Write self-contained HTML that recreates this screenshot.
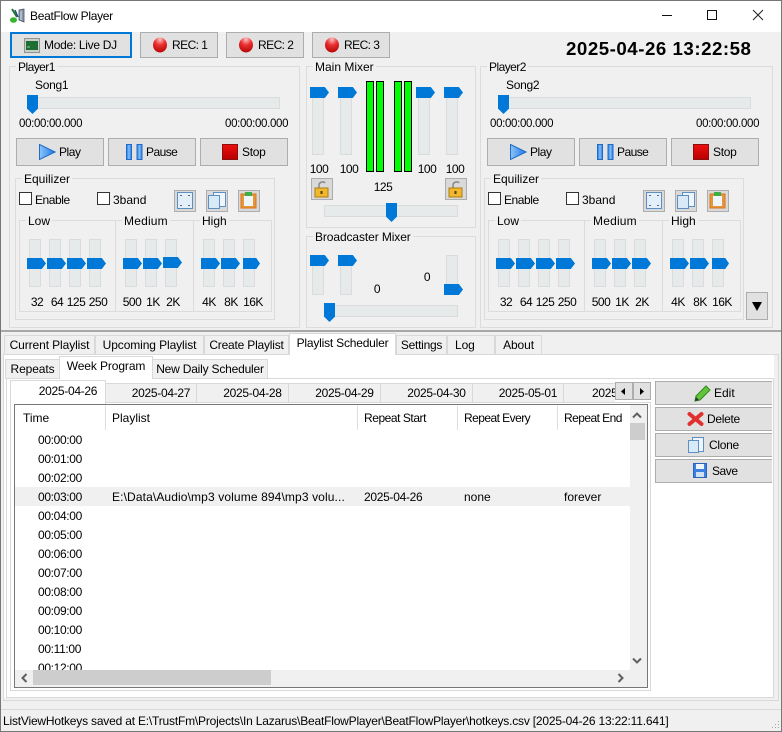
<!DOCTYPE html>
<html><head><meta charset="utf-8"><title>BeatFlow Player</title>
<style>
html,body{margin:0;padding:0;background:#f0f0f0}
#w{position:relative;width:782px;height:732px;overflow:hidden;background:#f0f0f0;font:12px/16px "Liberation Sans",sans-serif;color:#000}
#w div,#w svg{position:absolute}
.t{white-space:nowrap;height:16px}
.c{text-align:center;white-space:nowrap;height:16px;letter-spacing:-.5px}
.g{border:1px solid #dcdcdc;box-sizing:border-box}
.l{background:#f0f0f0;padding:0 2px;white-space:nowrap;height:14px;line-height:14px}
.b{background:#e1e1e1;border:1px solid #adadad;box-sizing:border-box}
.tr{background:#e7eaea;border:1px solid #dadcdc;box-sizing:border-box}
.th{background:#0078d7;clip-path:polygon(0 0,78% 0,100% 50%,78% 100%,0 100%)}
.tv{background:#0078d7;clip-path:polygon(0 0,100% 0,100% 72%,50% 100%,0 72%)}
.m{background:#00ff00;border:1px solid #000;box-sizing:border-box;width:8px;top:81px;height:91px}
.cb{background:#fff;border:1px solid #333;box-sizing:border-box;width:13px;height:13px}
.tab{background:#f0f0f0;border:1px solid #d9d9d9;box-sizing:border-box;text-align:center;white-space:nowrap;overflow:hidden;letter-spacing:-.1px}
.d{letter-spacing:-.3px}
.hs{background:#dedede;width:1px;top:406px;height:24px}
.ib{background:#d9d9d9;border:1px solid #adadad;box-sizing:border-box;width:22px;height:22px}
.tm{letter-spacing:-.33px;font-size:11.500px}
.r{letter-spacing:-.35px}
.s3{letter-spacing:-.3px}
.s4{letter-spacing:-.45px}
.s5{letter-spacing:-.55px}
</style></head><body><div id="w">

<!-- Window frame and title bar -->
<div style="left:0;top:0;width:782px;height:32px;background:#fff"></div>
<div style="left:0;top:0;width:782px;height:1px;background:#777"></div>
<div style="left:0;top:0;width:1px;height:732px;background:#777"></div>
<div style="left:781px;top:0;width:1px;height:732px;background:#777"></div>
<div style="left:0;top:731px;width:782px;height:1px;background:#777"></div>
<svg style="left:9px;top:7px" width="16" height="17" viewBox="0 0 16 17"><path d="M10 3l5-1v13l-5-2z" fill="#8a97a8" stroke="#46566a" stroke-width=".8"/><path d="M12 4v9" stroke="#d7dfe8"/><path d="M3 2l5 8" stroke="#1f7a22" stroke-width="2"/><path d="M6 3l3 7" stroke="#2a4e90" stroke-width="1.5"/><ellipse cx="4.500" cy="13" rx="3.500" ry="2.800" fill="#35b52c"/></svg>
<div class="t s3" style="left:30px;top:8px">BeatFlow Player</div>
<svg style="left:660px;top:7px" width="122" height="18" viewBox="0 0 122 18"><path d="M2 8.500H12" stroke="#111"/><rect x="47.500" y="3.500" width="9" height="9" fill="none" stroke="#111"/><path d="M93 3l10 10M103 3L93 13" stroke="#222" fill="none"/></svg>

<!-- Top buttons -->
<div class="b" style="left:10px;top:32px;width:122px;height:26px;border:2px solid #0078d7"></div>
<svg style="left:24px;top:38px" width="16" height="15" viewBox="0 0 16 15"><rect x=".5" y=".5" width="15" height="14" fill="#c8d0c8" stroke="#8f968f"/><rect x="2" y="3" width="12" height="9" fill="#1e6d33"/><path d="M3 9h3" stroke="#8fd09a"/></svg>
<div class="t s3" style="left:44px;top:37px">Mode: Live DJ</div>
<div class="b" style="left:140px;top:32px;width:78px;height:26px"></div>
<div class="b" style="left:226px;top:32px;width:78px;height:26px"></div>
<div class="b" style="left:312px;top:32px;width:78px;height:26px"></div>
<svg style="left:153px;top:37px" width="14" height="16"><defs><radialGradient id="r" cx=".5" cy=".12" r=".95"><stop offset="0" stop-color="#ffc4c4"/><stop offset=".42" stop-color="#e93030"/><stop offset="1" stop-color="#b00000"/></radialGradient></defs><ellipse cx="7" cy="8" rx="7" ry="7.500" fill="url(#r)"/></svg>
<svg style="left:239px;top:37px" width="14" height="16"><ellipse cx="7" cy="8" rx="7" ry="7.500" fill="url(#r)"/></svg>
<svg style="left:325px;top:37px" width="14" height="16"><ellipse cx="7" cy="8" rx="7" ry="7.500" fill="url(#r)"/></svg>
<div class="t s5" style="left:172px;top:37px">REC: 1</div>
<div class="t s5" style="left:258px;top:37px">REC: 2</div>
<div class="t s5" style="left:344px;top:37px">REC: 3</div>
<div class="t" style="left:566px;top:38px;height:22px;line-height:22px;font-size:18.700px;font-weight:bold;letter-spacing:.52px">2025-04-26 13:22:58</div>

<!-- Player 1 -->
<div class="g" style="left:9px;top:66px;width:291px;height:262px"></div>
<div class="l s5" style="left:16px;top:60px">Player1</div>
<div class="t s3" style="left:35px;top:77px">Song1</div>
<div class="tr" style="left:27px;top:97px;width:253px;height:12px"></div>
<div class="tv" style="left:27px;top:95px;width:11px;height:19px"></div>
<div class="t tm" style="left:19px;top:116px">00:00:00.000</div>
<div class="t tm" style="left:225px;top:116px">00:00:00.000</div>
<div class="b" style="left:16px;top:138px;width:88px;height:28px"></div>
<div class="b" style="left:108px;top:138px;width:88px;height:28px"></div>
<div class="b" style="left:200px;top:138px;width:88px;height:28px"></div>
<svg style="left:39px;top:144px" width="17" height="16"><defs><linearGradient id="pl" x1="0" x2="1"><stop offset="0" stop-color="#8cc4fa"/><stop offset="1" stop-color="#1f78e6"/></linearGradient><linearGradient id="pa" x1="0" x2="1"><stop offset="0" stop-color="#1f78e0"/><stop offset=".5" stop-color="#86bff8"/><stop offset="1" stop-color="#1f78e0"/></linearGradient><linearGradient id="st" x1="0" x2="0" y2="1"><stop offset="0" stop-color="#ee1010"/><stop offset="1" stop-color="#b80000"/></linearGradient></defs><path d="M.5 .5L16 8 .5 15.500z" fill="url(#pl)" stroke="#1f6cc8"/></svg>
<div class="t s4" style="left:59px;top:144px">Play</div>
<svg style="left:126px;top:144px" width="17" height="16"><rect x=".5" y=".5" width="5" height="15" fill="url(#pa)" stroke="#1f6cc8"/><rect x="11" y=".5" width="5" height="15" fill="url(#pa)" stroke="#1f6cc8"/></svg>
<div class="t s5" style="left:146px;top:144px">Pause</div>
<svg style="left:222px;top:144px" width="16" height="16"><rect x=".5" y=".5" width="15" height="15" fill="url(#st)" stroke="#8a1010"/></svg>
<div class="t s3" style="left:242px;top:144px">Stop</div>

<div class="g" style="left:15px;top:178px;width:260px;height:142px"></div>
<div class="l" style="left:22px;top:172px">Equilizer</div>
<div class="cb" style="left:19px;top:192px"></div><div class="t s4" style="left:35px;top:192px">Enable</div>
<div class="cb" style="left:97px;top:192px"></div><div class="t" style="left:113px;top:192px">3band</div>
<div class="ib" style="left:174px;top:190px"></div>
<div class="ib" style="left:206px;top:190px"></div>
<div class="ib" style="left:238px;top:190px"></div>
<svg style="left:177px;top:192px" width="16" height="17"><rect x=".5" y=".5" width="15" height="16" fill="#e3f0fb" stroke="#5d8fc0"/><path d="M3 3h2v1H3zM11 3h2v1h-2zM3 13h2v1H3zM11 13h2v1h-2z" fill="#667"/></svg>
<svg style="left:208px;top:192px" width="18" height="17"><rect x="5.500" y=".5" width="12" height="14" fill="#eef5fc" stroke="#5d8fc0"/><rect x=".5" y="3.500" width="11" height="13" fill="#d8e9f8" stroke="#5d8fc0"/></svg>
<svg style="left:240px;top:191px" width="17" height="18"><rect x="1" y="3" width="15" height="14" fill="#e7973a" stroke="#d8761e"/><rect x="4" y="5" width="9" height="10" fill="#eef5fc"/><rect x="5" y="1" width="7" height="4" fill="#3fae4a"/></svg>

<div class="g" style="left:19px;top:220px;width:97px;height:92px"></div>
<div class="g" style="left:115px;top:220px;width:79px;height:92px"></div>
<div class="g" style="left:193px;top:220px;width:79px;height:92px"></div>
<div class="l" style="left:26px;top:214px">Low</div>
<div class="l" style="left:122px;top:214px;letter-spacing:.2px">Medium</div>
<div class="l" style="left:200px;top:214px">High</div>

<div class="tr" style="left:29px;top:239px;width:12px;height:48px"></div>
<div class="tr" style="left:49px;top:239px;width:12px;height:48px"></div>
<div class="tr" style="left:69px;top:239px;width:12px;height:48px"></div>
<div class="tr" style="left:89px;top:239px;width:12px;height:48px"></div>
<div class="tr" style="left:125px;top:239px;width:12px;height:48px"></div>
<div class="tr" style="left:145px;top:239px;width:12px;height:48px"></div>
<div class="tr" style="left:165px;top:239px;width:12px;height:48px"></div>
<div class="tr" style="left:203px;top:239px;width:12px;height:48px"></div>
<div class="tr" style="left:223px;top:239px;width:12px;height:48px"></div>
<div class="tr" style="left:243px;top:239px;width:12px;height:48px"></div>
<div class="th" style="left:27px;top:258px;width:19px;height:11px"></div>
<div class="th" style="left:47px;top:258px;width:19px;height:11px"></div>
<div class="th" style="left:67px;top:258px;width:19px;height:11px"></div>
<div class="th" style="left:87px;top:258px;width:19px;height:11px"></div>
<div class="th" style="left:123px;top:258px;width:19px;height:11px"></div>
<div class="th" style="left:143px;top:258px;width:19px;height:11px"></div>
<div class="th" style="left:163px;top:257px;width:19px;height:11px"></div>
<div class="th" style="left:201px;top:258px;width:19px;height:11px"></div>
<div class="th" style="left:221px;top:258px;width:19px;height:11px"></div>
<div class="th" style="left:243px;top:258px;width:17px;height:11px"></div>
<div class="c" style="left:22px;top:294px;width:30px">32</div>
<div class="c" style="left:42px;top:294px;width:30px">64</div>
<div class="c" style="left:61px;top:294px;width:30px">125</div>
<div class="c" style="left:83px;top:294px;width:30px">250</div>
<div class="c" style="left:117px;top:294px;width:30px">500</div>
<div class="c" style="left:138px;top:294px;width:30px">1K</div>
<div class="c" style="left:158px;top:294px;width:30px">2K</div>
<div class="c" style="left:194px;top:294px;width:30px">4K</div>
<div class="c" style="left:216px;top:294px;width:30px">8K</div>
<div class="c" style="left:238px;top:294px;width:30px">16K</div>

<!-- Main Mixer -->
<div class="g" style="left:306px;top:66px;width:170px;height:162px"></div>
<div class="l" style="left:313px;top:60px">Main Mixer</div>
<div class="tr" style="left:312px;top:87px;width:12px;height:68px"></div>
<div class="tr" style="left:340px;top:87px;width:12px;height:68px"></div>
<div class="tr" style="left:418px;top:87px;width:12px;height:68px"></div>
<div class="tr" style="left:446px;top:87px;width:12px;height:68px"></div>
<div class="th" style="left:310px;top:87px;width:19px;height:11px"></div>
<div class="th" style="left:338px;top:87px;width:19px;height:11px"></div>
<div class="th" style="left:416px;top:87px;width:19px;height:11px"></div>
<div class="th" style="left:444px;top:87px;width:19px;height:11px"></div>
<div class="m" style="left:366px"></div><div class="m" style="left:376px"></div><div class="m" style="left:394px"></div><div class="m" style="left:404px"></div>
<div class="c" style="left:304px;top:161px;width:30px">100</div>
<div class="c" style="left:334px;top:161px;width:30px">100</div>
<div class="c" style="left:412px;top:161px;width:30px">100</div>
<div class="c" style="left:440px;top:161px;width:30px">100</div>
<div class="ib" style="left:311px;top:178px"></div>
<div class="ib" style="left:445px;top:178px"></div>
<svg style="left:314px;top:180px" width="17" height="18"><path d="M5 9V5c0-3 5-4 6-2" fill="none" stroke="#888" stroke-width="1.500"/><rect x="1" y="8" width="13" height="9" fill="#f0b82e" stroke="#b07a10"/><rect x="6.500" y="11" width="2" height="3" fill="#5a3c08"/></svg>
<svg style="left:448px;top:180px" width="17" height="18"><path d="M5 9V5c0-3 5-4 6-2" fill="none" stroke="#888" stroke-width="1.500"/><rect x="1" y="8" width="13" height="9" fill="#f0b82e" stroke="#b07a10"/><rect x="6.500" y="11" width="2" height="3" fill="#5a3c08"/></svg>
<div class="c" style="left:363px;top:179px;width:40px">125</div>
<div class="tr" style="left:324px;top:205px;width:134px;height:12px"></div>
<div class="tv" style="left:386px;top:203px;width:11px;height:19px"></div>

<!-- Broadcaster Mixer -->
<div class="g" style="left:306px;top:236px;width:170px;height:92px"></div>
<div class="l" style="left:313px;top:230px;letter-spacing:-.1px">Broadcaster Mixer</div>
<div class="tr" style="left:312px;top:255px;width:12px;height:40px"></div>
<div class="tr" style="left:340px;top:255px;width:12px;height:40px"></div>
<div class="tr" style="left:446px;top:255px;width:12px;height:40px"></div>
<div class="th" style="left:310px;top:255px;width:19px;height:11px"></div>
<div class="th" style="left:338px;top:255px;width:19px;height:11px"></div>
<div class="th" style="left:444px;top:284px;width:19px;height:11px"></div>
<div class="c" style="left:367px;top:281px;width:20px">0</div>
<div class="c" style="left:417px;top:269px;width:20px">0</div>
<div class="tr" style="left:324px;top:305px;width:134px;height:12px"></div>
<div class="tv" style="left:324px;top:303px;width:11px;height:19px"></div>

<!-- Player 2 -->
<div class="g" style="left:480px;top:66px;width:293px;height:262px"></div>
<div class="l s5" style="left:487px;top:60px">Player2</div>
<div class="t s3" style="left:506px;top:77px">Song2</div>
<div class="tr" style="left:498px;top:97px;width:253px;height:12px"></div>
<div class="tv" style="left:498px;top:95px;width:11px;height:19px"></div>
<div class="t tm" style="left:490px;top:116px">00:00:00.000</div>
<div class="t tm" style="left:696px;top:116px">00:00:00.000</div>
<div class="b" style="left:487px;top:138px;width:88px;height:28px"></div>
<div class="b" style="left:579px;top:138px;width:88px;height:28px"></div>
<div class="b" style="left:671px;top:138px;width:88px;height:28px"></div>
<svg style="left:510px;top:144px" width="17" height="16"><path d="M.5 .5L16 8 .5 15.500z" fill="url(#pl)" stroke="#1f6cc8"/></svg>
<div class="t s4" style="left:530px;top:144px">Play</div>
<svg style="left:597px;top:144px" width="17" height="16"><rect x=".5" y=".5" width="5" height="15" fill="url(#pa)" stroke="#1f6cc8"/><rect x="11" y=".5" width="5" height="15" fill="url(#pa)" stroke="#1f6cc8"/></svg>
<div class="t s5" style="left:617px;top:144px">Pause</div>
<svg style="left:693px;top:144px" width="16" height="16"><rect x=".5" y=".5" width="15" height="15" fill="url(#st)" stroke="#8a1010"/></svg>
<div class="t s3" style="left:713px;top:144px">Stop</div>

<div class="g" style="left:484px;top:178px;width:260px;height:142px"></div>
<div class="l" style="left:491px;top:172px">Equilizer</div>
<div class="cb" style="left:488px;top:192px"></div><div class="t s4" style="left:504px;top:192px">Enable</div>
<div class="cb" style="left:566px;top:192px"></div><div class="t" style="left:582px;top:192px">3band</div>
<div class="ib" style="left:643px;top:190px"></div>
<div class="ib" style="left:675px;top:190px"></div>
<div class="ib" style="left:707px;top:190px"></div>
<svg style="left:646px;top:192px" width="16" height="17"><rect x=".5" y=".5" width="15" height="16" fill="#e3f0fb" stroke="#5d8fc0"/><path d="M3 3h2v1H3zM11 3h2v1h-2zM3 13h2v1H3zM11 13h2v1h-2z" fill="#667"/></svg>
<svg style="left:677px;top:192px" width="18" height="17"><rect x="5.500" y=".5" width="12" height="14" fill="#eef5fc" stroke="#5d8fc0"/><rect x=".5" y="3.500" width="11" height="13" fill="#d8e9f8" stroke="#5d8fc0"/></svg>
<svg style="left:709px;top:191px" width="17" height="18"><rect x="1" y="3" width="15" height="14" fill="#e7973a" stroke="#d8761e"/><rect x="4" y="5" width="9" height="10" fill="#eef5fc"/><rect x="5" y="1" width="7" height="4" fill="#3fae4a"/></svg>

<div class="g" style="left:488px;top:220px;width:97px;height:92px"></div>
<div class="g" style="left:584px;top:220px;width:79px;height:92px"></div>
<div class="g" style="left:662px;top:220px;width:79px;height:92px"></div>
<div class="l" style="left:495px;top:214px">Low</div>
<div class="l" style="left:591px;top:214px;letter-spacing:.2px">Medium</div>
<div class="l" style="left:669px;top:214px">High</div>

<div class="tr" style="left:498px;top:239px;width:12px;height:48px"></div>
<div class="tr" style="left:518px;top:239px;width:12px;height:48px"></div>
<div class="tr" style="left:538px;top:239px;width:12px;height:48px"></div>
<div class="tr" style="left:558px;top:239px;width:12px;height:48px"></div>
<div class="tr" style="left:594px;top:239px;width:12px;height:48px"></div>
<div class="tr" style="left:614px;top:239px;width:12px;height:48px"></div>
<div class="tr" style="left:634px;top:239px;width:12px;height:48px"></div>
<div class="tr" style="left:672px;top:239px;width:12px;height:48px"></div>
<div class="tr" style="left:692px;top:239px;width:12px;height:48px"></div>
<div class="tr" style="left:712px;top:239px;width:12px;height:48px"></div>
<div class="th" style="left:496px;top:258px;width:19px;height:11px"></div>
<div class="th" style="left:516px;top:258px;width:19px;height:11px"></div>
<div class="th" style="left:536px;top:258px;width:19px;height:11px"></div>
<div class="th" style="left:556px;top:258px;width:19px;height:11px"></div>
<div class="th" style="left:592px;top:258px;width:19px;height:11px"></div>
<div class="th" style="left:612px;top:258px;width:19px;height:11px"></div>
<div class="th" style="left:632px;top:258px;width:19px;height:11px"></div>
<div class="th" style="left:670px;top:258px;width:19px;height:11px"></div>
<div class="th" style="left:690px;top:258px;width:19px;height:11px"></div>
<div class="th" style="left:712px;top:258px;width:17px;height:11px"></div>
<div class="c" style="left:491px;top:294px;width:30px">32</div>
<div class="c" style="left:511px;top:294px;width:30px">64</div>
<div class="c" style="left:530px;top:294px;width:30px">125</div>
<div class="c" style="left:552px;top:294px;width:30px">250</div>
<div class="c" style="left:586px;top:294px;width:30px">500</div>
<div class="c" style="left:607px;top:294px;width:30px">1K</div>
<div class="c" style="left:627px;top:294px;width:30px">2K</div>
<div class="c" style="left:663px;top:294px;width:30px">4K</div>
<div class="c" style="left:685px;top:294px;width:30px">8K</div>
<div class="c" style="left:707px;top:294px;width:30px">16K</div>
<div class="b" style="left:746px;top:292px;width:22px;height:28px"></div>
<svg style="left:752px;top:302px" width="10" height="9"><path d="M0 0h10L5 9z" fill="#000"/></svg>

<!-- Divider -->
<div style="left:1px;top:330px;width:780px;height:2px;background:#a8a8a8"></div>

<!-- Main tabs and panel -->
<div style="left:3px;top:354px;width:776px;height:347px;background:#f0f0f0;border:1px solid #d9d9d9;box-sizing:border-box"></div>
<div style="left:4px;top:355px;width:770px;height:343px;background:#fff"></div>
<div class="tab" style="left:4px;top:335px;width:91px;height:20px;line-height:19px">Current Playlist</div>
<div class="tab" style="left:95px;top:335px;width:109px;height:20px;line-height:19px">Upcoming Playlist</div>
<div class="tab" style="left:204px;top:335px;width:85px;height:20px;line-height:19px;letter-spacing:-.2px">Create Playlist</div>
<div class="tab" style="left:289px;top:333px;width:107px;height:22px;line-height:19px;background:#fff;border-bottom:0;letter-spacing:-.2px">Playlist Scheduler</div>
<div class="tab" style="left:396px;top:335px;width:51px;height:20px;line-height:19px;letter-spacing:-.25px">Settings</div>
<div class="tab" style="left:447px;top:335px;width:48px;height:20px;line-height:19px;text-align:left;padding-left:7px">Log</div>
<div class="tab" style="left:495px;top:335px;width:47px;height:20px;line-height:19px">About</div>

<!-- Sub tabs and panel -->
<div style="left:6px;top:378px;width:768px;height:320px;background:#fff;border:1px solid #d9d9d9;box-sizing:border-box"></div>
<div class="tab" style="left:5px;top:359px;width:55px;height:20px;line-height:19px">Repeats</div>
<div class="tab" style="left:59px;top:356px;width:94px;height:23px;line-height:19px;background:#fff;border-bottom:0">Week Program</div>
<div class="tab" style="left:152px;top:359px;width:116px;height:20px;line-height:19px;letter-spacing:-.2px">New Daily Scheduler</div>

<!-- Day tabs and panel -->
<div style="left:10px;top:402px;width:641px;height:289px;background:#fff;border:1px solid #d9d9d9;box-sizing:border-box"></div>
<div class="tab d" style="left:105px;top:383px;width:92px;height:20px;line-height:19px;padding-left:20px">2025-04-27</div>
<div class="tab d" style="left:196px;top:383px;width:93px;height:20px;line-height:19px;padding-left:20px">2025-04-28</div>
<div class="tab d" style="left:288px;top:383px;width:93px;height:20px;line-height:19px;padding-left:20px">2025-04-29</div>
<div class="tab d" style="left:380px;top:383px;width:93px;height:20px;line-height:19px;padding-left:20px">2025-04-30</div>
<div class="tab d" style="left:472px;top:383px;width:92px;height:20px;line-height:19px;padding-left:20px">2025-05-01</div>
<div class="tab d" style="left:563px;top:383px;width:52px;height:20px;line-height:19px;text-align:left;padding-left:28px;border-right:0">2025-05-02</div>
<div class="tab d" style="left:10px;top:380px;width:96px;height:24px;line-height:20px;background:#fff;border-bottom:0;padding-left:20px">2025-04-26</div>
<div class="b" style="left:615px;top:382px;width:18px;height:18px"></div>
<div class="b" style="left:633px;top:382px;width:18px;height:18px"></div>
<svg style="left:621px;top:388px" width="6" height="7"><path d="M4 0v7L0 3.500z" fill="#000"/></svg>
<svg style="left:639px;top:388px" width="6" height="7"><path d="M1 0v7l4-3.500z" fill="#000"/></svg>

<!-- List view -->
<div style="left:14px;top:404px;width:634px;height:284px;background:#fff;border:1px solid #777;box-sizing:border-box"></div>
<div class="hs" style="left:105px"></div><div class="hs" style="left:357px"></div><div class="hs" style="left:457px"></div><div class="hs" style="left:557px"></div>
<div class="t" style="left:23px;top:410px">Time</div>
<div class="t" style="left:112px;top:410px">Playlist</div>
<div class="t s4" style="left:364px;top:410px">Repeat Start</div>
<div class="t s5" style="left:464px;top:410px">Repeat Every</div>
<div class="t s5" style="left:564px;top:410px">Repeat End</div>
<div style="left:15px;top:487px;width:615px;height:19px;background:#f0f0f0"></div>
<div class="t r" style="left:38px;top:432px">00:00:00</div>
<div class="t r" style="left:38px;top:451px">00:01:00</div>
<div class="t r" style="left:38px;top:470px">00:02:00</div>
<div class="t r" style="left:38px;top:489px">00:03:00</div>
<div class="t r" style="left:38px;top:508px">00:04:00</div>
<div class="t r" style="left:38px;top:527px">00:05:00</div>
<div class="t r" style="left:38px;top:546px">00:06:00</div>
<div class="t r" style="left:38px;top:565px">00:07:00</div>
<div class="t r" style="left:38px;top:584px">00:08:00</div>
<div class="t r" style="left:38px;top:603px">00:09:00</div>
<div class="t r" style="left:38px;top:622px">00:10:00</div>
<div class="t r" style="left:38px;top:641px">00:11:00</div>
<div class="t r" style="left:38px;top:660px">00:12:00</div>
<div class="t" style="left:112px;top:489px;width:238px;overflow:hidden;letter-spacing:.12px">E:\Data\Audio\mp3 volume 894\mp3 volu...</div>
<div class="t d" style="left:364px;top:489px">2025-04-26</div>
<div class="t" style="left:464px;top:489px">none</div>
<div class="t" style="left:564px;top:489px">forever</div>
<!-- scrollbars -->
<div style="left:630px;top:405px;width:17px;height:282px;background:#f0f0f0"></div>
<div style="left:15px;top:670px;width:632px;height:17px;background:#f0f0f0"></div>
<div style="left:630px;top:423px;width:15px;height:17px;background:#cdcdcd"></div>
<div style="left:33px;top:670px;width:238px;height:15px;background:#cdcdcd"></div>
<svg style="left:632px;top:412px" width="10" height="7"><path d="M1 5.500l4-4 4 4" fill="none" stroke="#606060" stroke-width="2"/></svg>
<svg style="left:632px;top:657px" width="10" height="7"><path d="M1 1.500l4 4 4-4" fill="none" stroke="#606060" stroke-width="2"/></svg>
<svg style="left:21px;top:673px" width="7" height="10"><path d="M5.500 1l-4 4 4 4" fill="none" stroke="#606060" stroke-width="2"/></svg>
<svg style="left:617px;top:673px" width="7" height="10"><path d="M1.500 1l4 4-4 4" fill="none" stroke="#606060" stroke-width="2"/></svg>

<!-- Side buttons -->
<div class="b" style="left:655px;top:381px;width:117px;height:24px;border-right:0"></div>
<div class="b" style="left:655px;top:407px;width:117px;height:24px;border-right:0"></div>
<div class="b" style="left:655px;top:433px;width:117px;height:24px;border-right:0"></div>
<div class="b" style="left:655px;top:459px;width:117px;height:24px;border-right:0"></div>
<svg style="left:694px;top:385px" width="17" height="17"><path d="M1 16l1-5L12 1l4 4L6 15z" fill="#62c43a" stroke="#2f8a1c"/><path d="M1 16l1-4 3 3z" fill="#333"/></svg>
<div class="t" style="left:714px;top:385px">Edit</div>
<svg style="left:687px;top:411px" width="17" height="16"><path d="M2.500 3l6 5 6-5M2.500 13l6-5 6 5" fill="none" stroke="#e03030" stroke-width="4" stroke-linecap="round"/></svg>
<div class="t s3" style="left:707px;top:411px">Delete</div>
<svg style="left:688px;top:437px" width="17" height="16"><rect x="4.500" y=".5" width="11" height="14" fill="#eef5fc" stroke="#5d8fc0"/><rect x=".5" y="3.500" width="10" height="12" fill="#d8e9f8" stroke="#5d8fc0"/></svg>
<div class="t s3" style="left:709px;top:437px">Clone</div>
<svg style="left:693px;top:463px" width="14" height="15"><rect x=".5" y=".5" width="13" height="14" fill="#3c80e0" stroke="#2a62b8"/><rect x="3" y="1" width="8" height="5" fill="#eef5fc"/><rect x="3" y="9" width="8" height="5" fill="#cfe0f5"/></svg>
<div class="t s4" style="left:712px;top:463px">Save</div>

<!-- Status bar -->
<div style="left:1px;top:709px;width:780px;height:1px;background:#d9d9d9"></div>
<div class="t" style="left:3px;top:713px;letter-spacing:-.195px">ListViewHotkeys saved at E:\TrustFm\Projects\In Lazarus\BeatFlowPlayer\BeatFlowPlayer\hotkeys.csv [2025-04-26 13:22:11.641]</div>
<svg style="left:770px;top:720px" width="10" height="10"><path d="M8 1h1v1H8zM5 4h1v1H5zM8 4h1v1H8zM2 7h1v1H2zM5 7h1v1H5zM8 7h1v1H8z" fill="#a8a8a8"/></svg>

</div></body></html>
